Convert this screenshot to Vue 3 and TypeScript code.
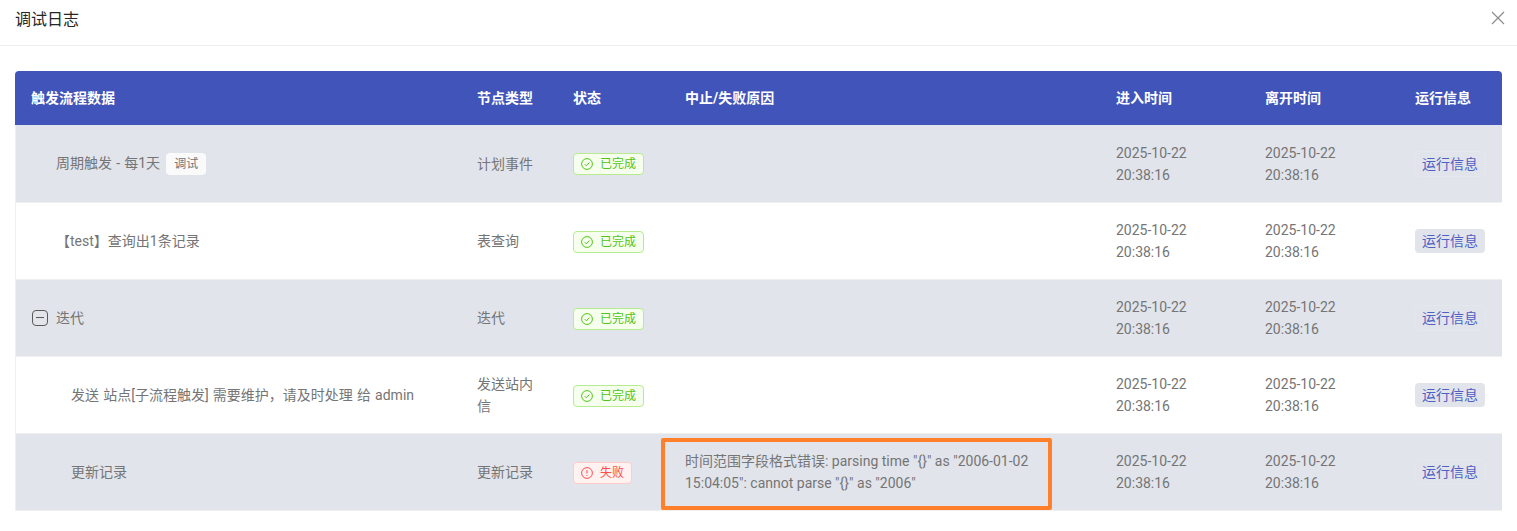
<script setup lang="ts">
interface Row {
  name: string
  indent: number
  debug?: boolean
  toggle?: boolean
  type: string
  ok: boolean
  reason?: string
}

const rows: Row[] = [
  { name: '周期触发 - 每1天', indent: 40, debug: true, type: '计划事件', ok: true },
  { name: '【test】查询出1条记录', indent: 40, type: '表查询', ok: true },
  { name: '迭代', indent: 40, toggle: true, type: '迭代', ok: true },
  { name: '发送 站点[子流程触发] 需要维护，请及时处理 给 admin', indent: 55, type: '发送站内信', ok: true },
  {
    name: '更新记录',
    indent: 55,
    type: '更新记录',
    ok: false,
    reason: '时间范围字段格式错误: parsing time "{}" as "2006-01-02 15:04:05": cannot parse "{}" as "2006"',
  },
]
</script>

<template>
  <div class="dialog">
    <header class="head">
      <span class="title">调试日志</span>
      <svg class="close" width="14" height="14" viewBox="0 0 14 14" aria-label="关闭">
        <path d="M1 1l12 12M13 1L1 13" stroke="#8c8c8c" stroke-width="1.2" fill="none" />
      </svg>
    </header>
    <div class="body">
      <table class="table">
        <colgroup>
          <col style="width: 446px" />
          <col style="width: 96px" />
          <col style="width: 112px" />
          <col style="width: 431px" />
          <col style="width: 149px" />
          <col style="width: 150px" />
          <col style="width: 103px" />
        </colgroup>
        <thead>
          <tr>
            <th>触发流程数据</th>
            <th>节点类型</th>
            <th>状态</th>
            <th>中止/失败原因</th>
            <th>进入时间</th>
            <th>离开时间</th>
            <th>运行信息</th>
          </tr>
        </thead>
        <tbody>
          <tr v-for="(r, i) in rows" :key="i" :class="{ shaded: i !== 1 && i !== 3 }">
            <td class="first" :style="{ paddingLeft: r.indent + 'px' }">
              <span class="name">
                <span v-if="r.toggle" class="toggle"></span>
                {{ r.name }}
                <span v-if="r.debug" class="debug">调试</span>
              </span>
            </td>
            <td>{{ r.type }}</td>
            <td>
              <span class="status" :class="r.ok ? 'ok' : 'fail'">
                <svg v-if="r.ok" width="12" height="12" viewBox="0 0 12 12">
                  <circle cx="6" cy="6" r="5.4" fill="none" stroke="currentColor" />
                  <path d="M3.7 6.1l1.7 1.7 3-3.2" fill="none" stroke="currentColor" />
                </svg>
                <svg v-else width="12" height="12" viewBox="0 0 12 12">
                  <circle cx="6" cy="6" r="5.4" fill="none" stroke="currentColor" />
                  <path d="M6 3v3.6M6 8v1" fill="none" stroke="currentColor" />
                </svg>
                {{ r.ok ? '已完成' : '失败' }}
              </span>
            </td>
            <td class="reason">{{ r.reason }}</td>
            <td>2025-10-22<br />20:38:16</td>
            <td>2025-10-22<br />20:38:16</td>
            <td><span class="run">运行信息</span></td>
          </tr>
        </tbody>
      </table>
      <div class="highlight"></div>
    </div>
  </div>
</template>

<style scoped>
.dialog {
  width: 1517px;
  height: 531px;
  overflow: hidden;
  background: #fff;
  font-family: Roboto, "Noto Sans CJK SC", sans-serif;
  font-size: 14px;
  color: #757575;
}
.head {
  box-sizing: content-box;
  border-bottom: 1px solid #eeeeee;
  display: flex;
  align-items: center;
  justify-content: space-between;
  padding: 0 12px 10px 15px;
  height: 35px;
}
.title {
  font-size: 16px;
  color: #262626;
}
.close {
  display: block;
}
.body {
  position: relative;
  padding: 25px 15px 0;
}
.table {
  width: 1487px;
  table-layout: fixed;
  border-collapse: separate;
  border-spacing: 0;
}
th {
  height: 54px;
  padding: 0 16px 2px;
  box-sizing: border-box;
  background: #4054b9;
  color: #fff;
  font-size: 14px;
  font-weight: 700;
  text-align: left;
  white-space: nowrap;
}
th:first-child {
  border-top-left-radius: 4px;
}
th:last-child {
  border-top-right-radius: 4px;
}
td {
  height: 77px;
  padding: 0 16px;
  box-sizing: border-box;
  border-bottom: 1px solid #f0f0f0;
  line-height: 22px;
  font-size: 14px;
}
tbody tr:first-child td {
  height: 78px;
}
td.first {
  border-left: 1px solid #f0f0f0;
}
tr.shaded td {
  background: #e1e4eb;
}
.name {
  position: relative;
  display: inline-block;
  word-spacing: 0.7px;
}
.toggle {
  position: absolute;
  left: -24px;
  top: 3px;
  width: 16px;
  height: 16px;
  box-sizing: border-box;
  border: 1px solid #595959;
  border-radius: 4px;
}
.toggle::after {
  content: "";
  position: absolute;
  left: 3px;
  right: 3px;
  top: 6px;
  height: 1px;
  background: #595959;
}
.debug {
  display: inline-block;
  margin-left: 2px;
  padding: 0 8px;
  height: 22px;
  line-height: 22px;
  background: #fafafa;
  border-radius: 4px;
  font-size: 12px;
}
.status {
  display: inline-flex;
  align-items: center;
  gap: 7px;
  height: 22px;
  padding: 0 7px;
  box-sizing: border-box;
  border: 1px solid;
  border-radius: 4px;
  font-size: 12px;
  line-height: 20px;
  vertical-align: middle;
}
.ok {
  color: #52c41a;
  background: #f6ffed;
  border-color: #b7eb8f;
}
.fail {
  color: #ff4d4f;
  background: #fff2f0;
  border-color: #ffccc7;
}
.reason {
  padding-right: 60px;
}
.run {
  display: inline-block;
  width: 70px;
  height: 24px;
  line-height: 24px;
  text-align: center;
  border-radius: 4px;
  color: #4f60c2;
  font-size: 14px;
}
tr:not(.shaded) .run {
  background: #e1e4eb;
}
tr.shaded .run {
  box-shadow: 0 0 0 1px #e4e7ee;
}
.highlight {
  position: absolute;
  left: 661px;
  top: 392px;
  width: 391px;
  height: 72px;
  box-sizing: border-box;
  border: 4px solid #ff7f2a;
  border-radius: 2px;
  pointer-events: none;
}
</style>
